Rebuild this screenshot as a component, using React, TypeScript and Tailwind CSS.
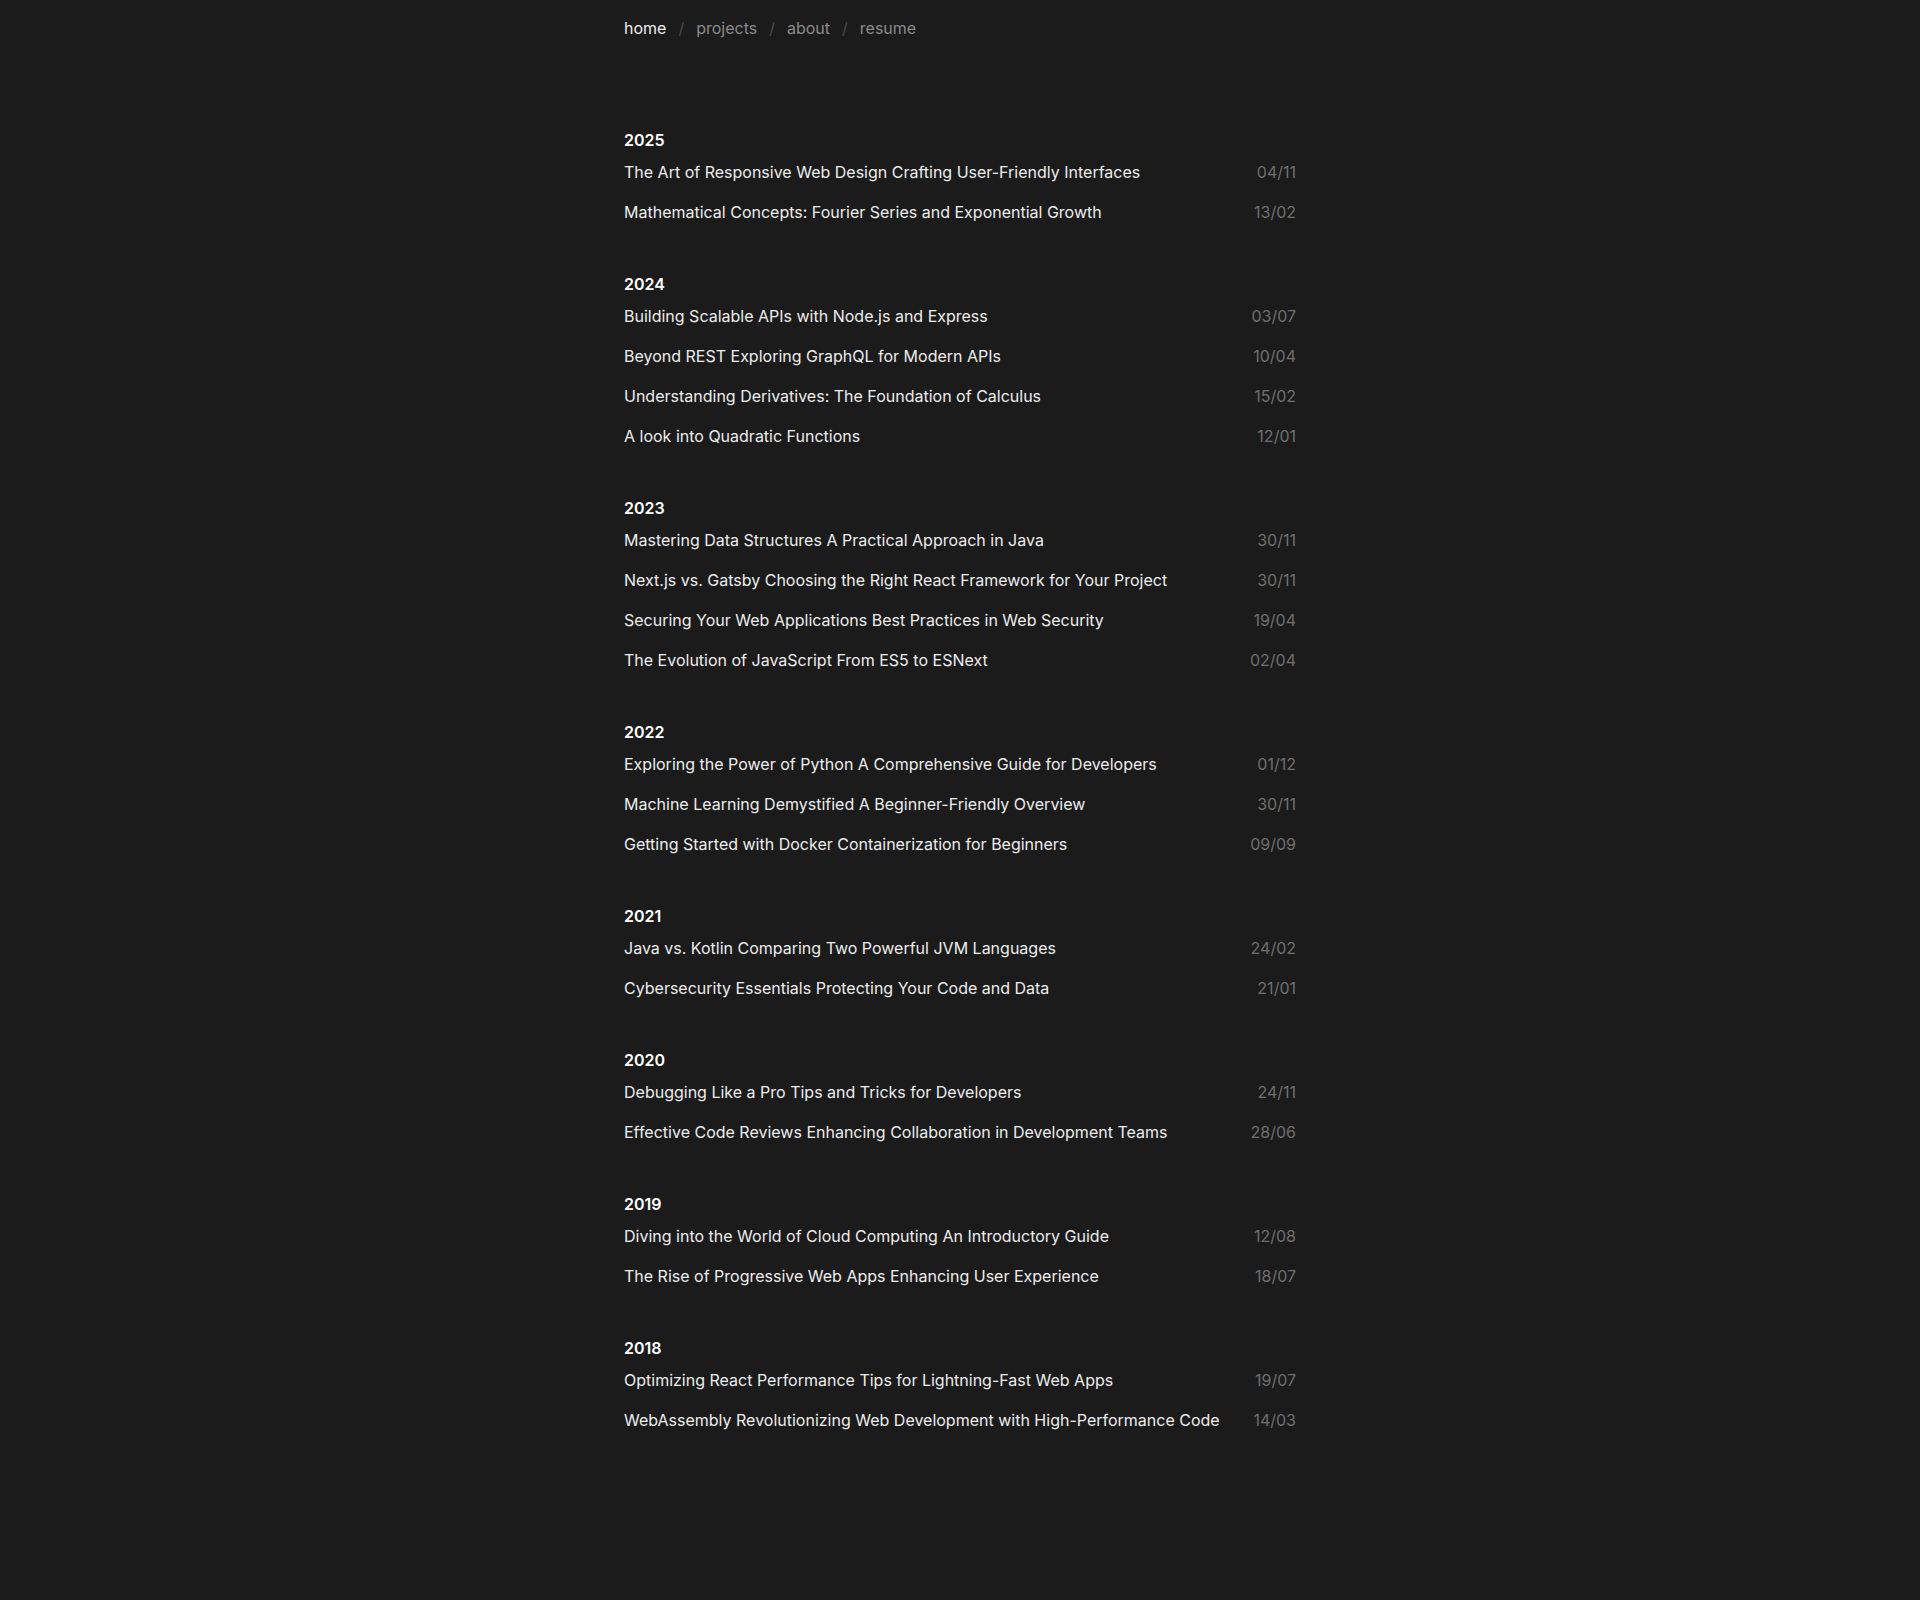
import React from 'react';

type Post = { title: string; date: string };

const posts: { year: string; items: Post[] }[] = [
  {
    year: '2025',
    items: [
      { title: 'The Art of Responsive Web Design Crafting User-Friendly Interfaces', date: '04/11' },
      { title: 'Mathematical Concepts: Fourier Series and Exponential Growth', date: '13/02' },
    ],
  },
  {
    year: '2024',
    items: [
      { title: 'Building Scalable APIs with Node.js and Express', date: '03/07' },
      { title: 'Beyond REST Exploring GraphQL for Modern APIs', date: '10/04' },
      { title: 'Understanding Derivatives: The Foundation of Calculus', date: '15/02' },
      { title: 'A look into Quadratic Functions', date: '12/01' },
    ],
  },
  {
    year: '2023',
    items: [
      { title: 'Mastering Data Structures A Practical Approach in Java', date: '30/11' },
      { title: 'Next.js vs. Gatsby Choosing the Right React Framework for Your Project', date: '30/11' },
      { title: 'Securing Your Web Applications Best Practices in Web Security', date: '19/04' },
      { title: 'The Evolution of JavaScript From ES5 to ESNext', date: '02/04' },
    ],
  },
  {
    year: '2022',
    items: [
      { title: 'Exploring the Power of Python A Comprehensive Guide for Developers', date: '01/12' },
      { title: 'Machine Learning Demystified A Beginner-Friendly Overview', date: '30/11' },
      { title: 'Getting Started with Docker Containerization for Beginners', date: '09/09' },
    ],
  },
  {
    year: '2021',
    items: [
      { title: 'Java vs. Kotlin Comparing Two Powerful JVM Languages', date: '24/02' },
      { title: 'Cybersecurity Essentials Protecting Your Code and Data', date: '21/01' },
    ],
  },
  {
    year: '2020',
    items: [
      { title: 'Debugging Like a Pro Tips and Tricks for Developers', date: '24/11' },
      { title: 'Effective Code Reviews Enhancing Collaboration in Development Teams', date: '28/06' },
    ],
  },
  {
    year: '2019',
    items: [
      { title: 'Diving into the World of Cloud Computing An Introductory Guide', date: '12/08' },
      { title: 'The Rise of Progressive Web Apps Enhancing User Experience', date: '18/07' },
    ],
  },
  {
    year: '2018',
    items: [
      { title: 'Optimizing React Performance Tips for Lightning-Fast Web Apps', date: '19/07' },
      { title: 'WebAssembly Revolutionizing Web Development with High-Performance Code', date: '14/03' },
    ],
  },
];

const navLinks = ['home', 'projects', 'about', 'resume'];

export default function App() {
  return (
    <div className="min-h-screen bg-[#1b1b1b] font-['Inter',sans-serif] text-[#ededed]">
      <div className="mx-auto max-w-2xl">
        {/* Top nav */}
        <nav className="flex items-center gap-3 py-4 text-base">
          {navLinks.map((link, i) => (
            <React.Fragment key={link}>
              {i > 0 && <span className="text-[#4a4a4a]">/</span>}
              <a href="#" className={i === 0 ? 'text-[#ededed]' : 'text-[#8a8a8a] hover:text-[#ededed]'}>
                {link}
              </a>
            </React.Fragment>
          ))}
        </nav>

        <main className="mt-[72px] flex flex-col gap-10 pb-24">
          {posts.map(group => (
            <section key={group.year}>
              <h2 className="text-base font-semibold text-white">{group.year}</h2>
              <ul>
                {group.items.map(post => (
                  <li key={post.title} className="flex items-center justify-between py-2">
                    <a href="#" className="text-[#ededed] hover:text-white">{post.title}</a>
                    <span className="text-[#6f6f6f]">{post.date}</span>
                  </li>
                ))}
              </ul>
            </section>
          ))}
        </main>
      </div>
    </div>
  );
}
